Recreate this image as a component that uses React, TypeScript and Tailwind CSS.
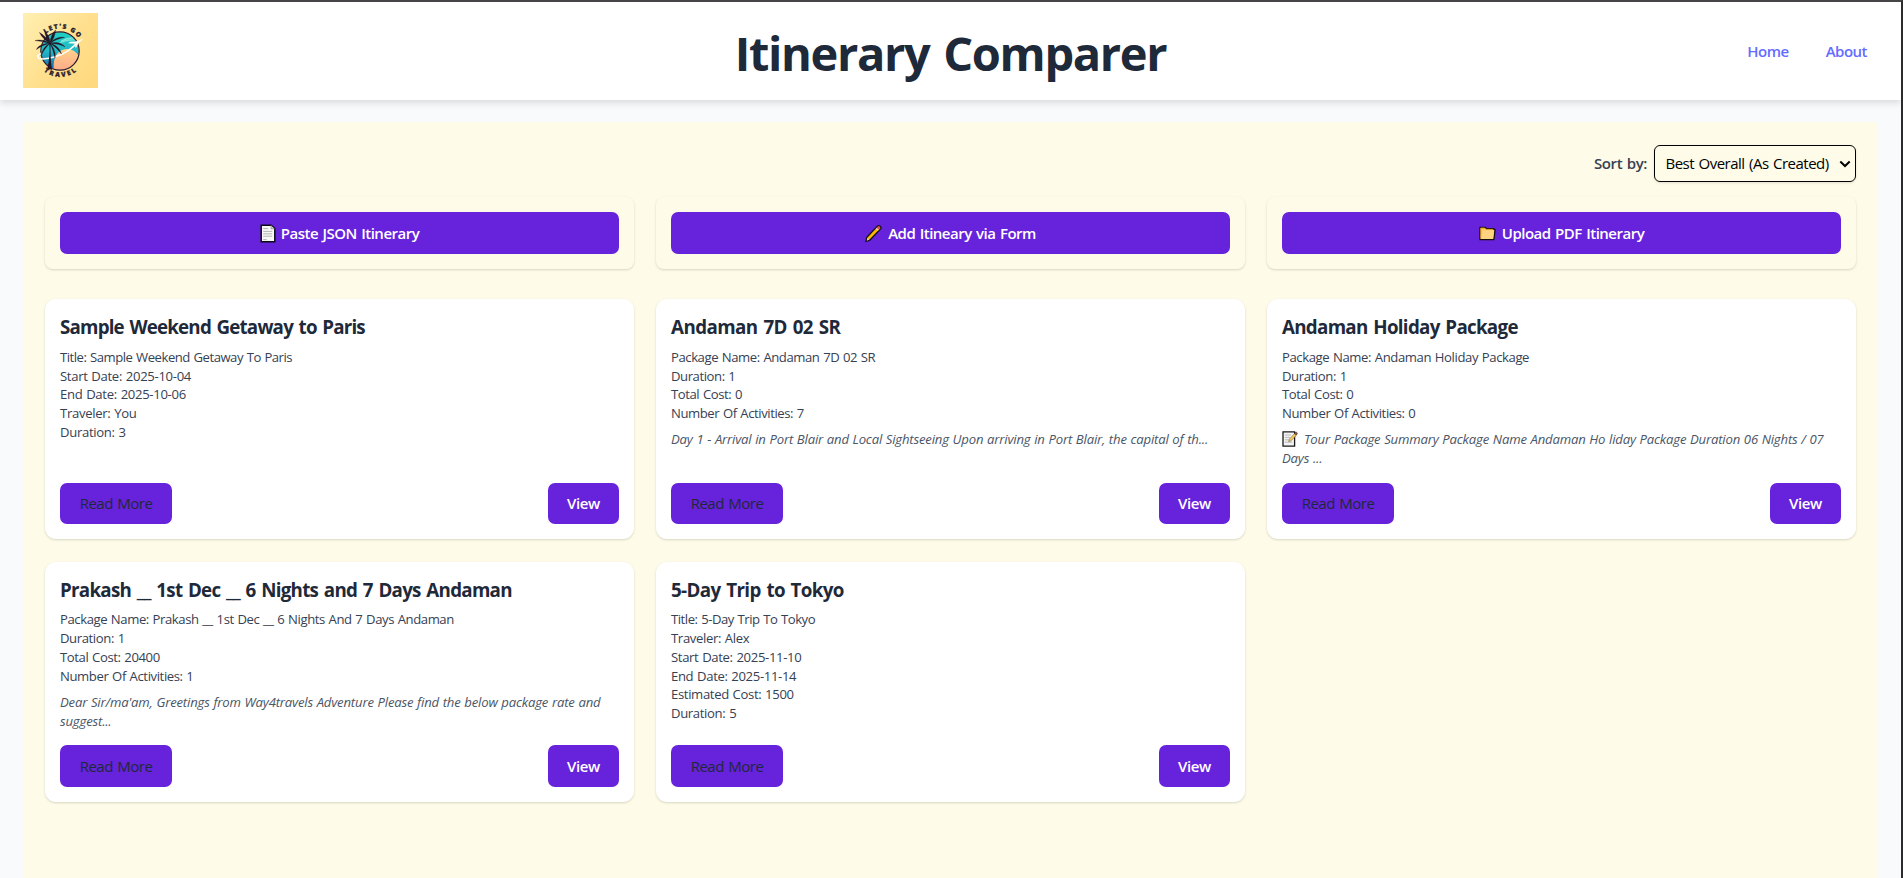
import React from "react";

type Itinerary = {
  title: string;
  titleTracking: string;
  details: string[];
  detailTracking: string;
  summary?: React.ReactNode;
};

const PageIcon = () => (
  <svg width="16" height="19" viewBox="0 0 16 19" className="shrink-0">
    <path d="M1.2 1.2h10l3.6 3.4v13.2H1.2z" fill="#f7f7f7" stroke="#0b0b14" strokeWidth="1.5" />
    <path d="M11 1.4v3.4h3.6" fill="#d4d4d4" stroke="#777" strokeWidth=".6" />
    <path d="M3.2 4.6h5M3.2 7.4h9M3.2 9.8h9M3.2 12.2h9M3.2 15.6h3.4" stroke="#b3b3b3" strokeWidth="1" />
  </svg>
);

const PencilIcon = () => (
  <svg width="17" height="19" viewBox="0 0 18 19" className="shrink-0">
    <path d="M1.1 17.9l.9-4.4L13.2 1.7c1.9-1.5 4.6.7 3.3 2.9L5.2 16.4z" fill="#f9b900" stroke="#15101c" strokeWidth="1.5" strokeLinejoin="round" />
    <path d="M12.3 3.6l1.3-1.3c1.3-.9 3.2.6 2.3 2l-1.2 1.3z" fill="#e8465a" />
    <path d="M11.3 4.6l1-1 2.4 2-1 1.1z" fill="#d5d5d5" />
    <path d="M1.9 17.1l.8-3 1.9 1.7z" fill="#f6d8b0" />
  </svg>
);

const FolderIcon = () => (
  <svg width="17" height="15" viewBox="0 0 18 16" className="shrink-0">
    <path d="M1 14.6V1.4h5.4l1.3 1.3h8.1v1.1h1.3l-1.4 10.8z" fill="#fdc960" stroke="#14100c" strokeWidth="1.4" strokeLinejoin="round" />
    <path d="M1.8 13.6V2.2h4.2l1.4 1.4h7.7" fill="none" stroke="#e39a1f" strokeWidth="1" />
    <path d="M3.6 4.6h12.4l-1.1 9.2H2.3z" fill="#ffd480" />
  </svg>
);

const MemoIcon = () => (
  <svg width="16" height="16" viewBox="0 0 16 16" className="mr-[6px] inline-block align-[-3px]">
    <path d="M1 .9h11.6v14.2H1z" fill="#f3f3f3" stroke="#1a1a1a" strokeWidth="1.3" />
    <path d="M2.8 4h6M2.8 6.4h5M2.8 8.8h4M2.8 11.2h7.5" stroke="#b9b9b9" strokeWidth="1" />
    <path d="M6.6 10.6l.7-2.5 5.9-6.2 1.8 1.7-5.9 6.2z" fill="#f5c860" stroke="#6a5430" strokeWidth=".5" />
    <path d="M12.4 2.6l1.3-1.3c.8-.5 2 .6 1.5 1.5l-1.2 1.3z" fill="#8a5550" stroke="#222" strokeWidth=".5" />
  </svg>
);

const Logo = () => (
  <svg width="75" height="75" viewBox="0 0 75 75" className="mb-[2px] shrink-0">
    <defs>
      <linearGradient id="logoBg" x1="0" y1="0" x2="1" y2=".8">
        <stop offset="0" stopColor="#fff0b3" />
        <stop offset=".55" stopColor="#ffe08f" />
        <stop offset="1" stopColor="#ffd97f" />
      </linearGradient>
      <linearGradient id="logoSky" x1="0" y1="0" x2="0" y2="1">
        <stop offset="0" stopColor="#1fcfc4" />
        <stop offset=".5" stopColor="#23b9c6" />
        <stop offset="1" stopColor="#1766a8" />
      </linearGradient>
      <linearGradient id="logoSand" x1="0" y1="0" x2="0" y2="1">
        <stop offset="0" stopColor="#ffd28a" />
        <stop offset="1" stopColor="#ffa588" />
      </linearGradient>
      <clipPath id="logoDisc">
        <circle cx="37" cy="38" r="19" />
      </clipPath>
      <path id="logoTop" d="M14.5 38a22.5 22.5 0 0 1 45 0" />
      <path id="logoBottom" d="M11 38a26 26 0 0 0 52 0" />
    </defs>
    <rect width="75" height="75" fill="url(#logoBg)" />
    <g clipPath="url(#logoDisc)">
      <circle cx="37" cy="38" r="19" fill="url(#logoSky)" />
      <path d="M35 31q8-5 19-4M38 28q6-3 12-3" stroke="#7be6dc" strokeWidth="1.3" fill="none" />
      <path d="M31 60c-1-9 0-17 5-21 6-5 16-4 21 6v15z" fill="url(#logoSand)" />
    </g>
    <circle cx="37" cy="38" r="19.2" fill="none" stroke="#2a1a2b" strokeWidth="1.2" />
    <path d="M18 40.6c-4 1.6-4.6 5 .6 5.3 8 .4 19-3 27-8.6 4-3 7-5.8 9-8.4" fill="none" stroke="#fffdf4" strokeWidth="1.6" />
    <path d="M60.8 25.5l-5.3 4.6-2.2 4.4-1.2-.1.5-3.7-7.4-.4 1.7-1.5 6-.3z" fill="#fffdf4" />
    <path d="M26.2 30c1 8 .2 17-1.8 25.5l4.6 1.6c-1.4-8-1.6-18-1.5-27z" fill="#261424" />
    <g fill="#261424" stroke="#261424" strokeWidth=".35">
      <path d="M27 30.5C24 25 20 21.5 16.5 19.5c2 4.5 6 8 10.5 11z" />
      <path d="M27 30.5C22 27 16 26.5 12 27.6c5 .6 10 1.4 15 2.9z" />
      <path d="M27 30.5c-6-.5-12 2-13.5 6 4-3 8-5 13.5-6z" />
      <path d="M27 30.5c-5 2-8 7-8.5 11.5 2-4.5 4.5-8 8.5-11.5z" />
      <path d="M27 30.5c0-5-2-9.5-5.5-12.5.8 4.5 2.5 9 5.5 12.5z" />
      <path d="M27 30.5c0-5 2-10 5.5-13.5-.4 4.5-2 10-5.5 13.5z" />
      <path d="M27 30.5c3-4.500 9-7 14.500-6-5 .8-10 2.500-14.500 6z" />
      <path d="M27 30.500c5-2 11.500-.8 15 3.300-5-2.400-10-3.400-15-3.300z" />
      <path d="M27 30.500c5.500 1 10 5 11.500 10.500-3.500-4.500-6.500-7.500-11.500-10.500z" />
      <path d="M27 30.500c3.500 3.500 6 9 5 14.500-1.500-5.500-2.500-10-5-14.500z" />
    </g>
    <text className="fill-[#2a1a2b] font-['Open_Sans',sans-serif] text-[6.5px] font-extrabold" stroke="#2a1a2b" strokeWidth=".25">
      <textPath href="#logoTop" startOffset="54%" textAnchor="middle" textLength="37">LET'S GO</textPath>
    </text>
    <text className="fill-[#2a1a2b] font-['Open_Sans',sans-serif] text-[6.5px] font-extrabold" stroke="#2a1a2b" strokeWidth=".25">
      <textPath href="#logoBottom" startOffset="50%" textAnchor="middle" textLength="35">TRAVEL</textPath>
    </text>
  </svg>
);

const actions = [
  { icon: <PageIcon />, label: "Paste JSON Itinerary", gap: "gap-[5px]" },
  { icon: <PencilIcon />, label: "Add Itineary via Form", gap: "gap-[6px]" },
  { icon: <FolderIcon />, label: "Upload PDF Itinerary", gap: "gap-[6px]" },
];

const itineraries: Itinerary[] = [
  {
    title: "Sample Weekend Getaway to Paris",
    titleTracking: "tracking-[-0.81px]",
    details: ["Title: Sample Weekend Getaway To Paris", "Start Date: 2025-10-04", "End Date: 2025-10-06", "Traveler: You", "Duration: 3"],
    detailTracking: "tracking-[-0.32px] first:tracking-[-0.48px]",
  },
  {
    title: "Andaman 7D 02 SR",
    titleTracking: "tracking-[-0.56px]",
    details: ["Package Name: Andaman 7D 02 SR", "Duration: 1", "Total Cost: 0", "Number Of Activities: 7"],
    detailTracking: "tracking-[-0.43px]",
    summary: "Day 1 - Arrival in Port Blair and Local Sightseeing Upon arriving in Port Blair, the capital of th...",
  },
  {
    title: "Andaman Holiday Package",
    titleTracking: "tracking-[-0.7px]",
    details: ["Package Name: Andaman Holiday Package", "Duration: 1", "Total Cost: 0", "Number Of Activities: 0"],
    detailTracking: "tracking-[-0.4px]",
    summary: (
      <>
        <MemoIcon />
        Tour Package Summary Package Name Andaman Ho liday Package Duration 06 Nights / 07 Days ...
      </>
    ),
  },
  {
    title: "Prakash __ 1st Dec __ 6 Nights and 7 Days Andaman",
    titleTracking: "tracking-[-0.73px]",
    details: ["Package Name: Prakash __ 1st Dec __ 6 Nights And 7 Days Andaman", "Duration: 1", "Total Cost: 20400", "Number Of Activities: 1"],
    detailTracking: "tracking-[-0.4px] first:tracking-[-0.42px]",
    summary: "Dear Sir/ma'am, Greetings from Way4travels Adventure Please find the below package rate and suggest...",
  },
  {
    title: "5-Day Trip to Tokyo",
    titleTracking: "tracking-[-0.63px]",
    details: ["Title: 5-Day Trip To Tokyo", "Traveler: Alex", "Start Date: 2025-11-10", "End Date: 2025-11-14", "Estimated Cost: 1500", "Duration: 5"],
    detailTracking: "tracking-[-0.35px] first:tracking-[-0.47px]",
  },
];

function ItineraryCard({ item }: { item: Itinerary }) {
  return (
    <article className="flex h-[240px] flex-col rounded-[11px] bg-white p-[15px] shadow-[0_1px_3px_rgba(0,0,0,0.1),0_1px_2px_rgba(0,0,0,0.06)]">
      <h2 className={`mb-[7.5px] text-[18.75px] leading-[26.25px] font-bold [word-spacing:1.5px] whitespace-nowrap text-gray-800 ${item.titleTracking}`}>{item.title}</h2>
      <ul className="text-[13.125px] leading-[18.75px] [word-spacing:0.7px] text-gray-700">
        {item.details.map((line) => (
          <li key={line} className={item.detailTracking}>
            {line}
          </li>
        ))}
      </ul>
      {item.summary && (
        <p className="mt-[7.5px] text-[13.125px] leading-[18.75px] tracking-[-0.17px] [word-spacing:0.5px] text-gray-600 italic">{item.summary}</p>
      )}
      <div className="mt-auto flex items-center justify-between">
        <button className="h-[41.25px] w-[112px] rounded-[7px] bg-[#6722dc] font-medium tracking-[-0.5px] [word-spacing:1px] text-gray-800">Read More</button>
        <button className="h-[41.25px] w-[71px] rounded-[7px] bg-[#6722dc] font-semibold tracking-[-0.35px] text-white">View</button>
      </div>
    </article>
  );
}

export default function App() {
  return (
    <div className="h-screen overflow-hidden border-t-2 border-r-2 border-t-[#464446] border-r-[#2b2b2b] bg-[#f8fafc] font-['Open_Sans','Noto_Sans',sans-serif] text-[15px] leading-[22.5px]">
      <header className="grid h-[98px] grid-cols-[1fr_auto_1fr] items-center bg-white px-[23px] shadow-[0_3px_7px_rgba(0,0,0,0.13)]">
        <Logo />
        <h1 className="pt-[3px] text-[47px] leading-[60px] font-bold tracking-[-1.35px] [word-spacing:3px] text-gray-800">Itinerary Comparer</h1>
        <nav className="flex justify-end gap-[37px] pr-[11px] font-semibold tracking-[-0.5px] text-[#646cff]">
          <a href="#home">Home</a>
          <a href="#about">About</a>
        </nav>
      </header>

      <main className="mx-[23px] mt-[22px] h-[800px] bg-[#fefce8] px-[22px] pt-[23px]">
        <div className="mb-[15px] flex h-[37px] items-center justify-end gap-[7px]">
          <label htmlFor="sort" className="font-semibold tracking-[-0.4px] [word-spacing:1px] text-gray-700">
            Sort by:
          </label>
          <div className="grid h-[37px] w-[202px] items-center">
            <select
              id="sort"
              className="col-start-1 row-start-1 h-[37px] w-full appearance-none rounded-[6px] border border-black bg-transparent pl-[10.5px] tracking-[-0.5px] [word-spacing:1px] text-black shadow-sm outline-none"
            >
              <option>Best Overall (As Created)</option>
            </select>
            <svg width="12" height="8" viewBox="0 0 12 8" className="pointer-events-none col-start-1 row-start-1 mr-[5px] justify-self-end">
              <path d="M1.3 1.5L6 6l4.7-4.5" fill="none" stroke="#000" strokeWidth="2" />
            </svg>
          </div>
        </div>

        <div className="mb-[30px] grid grid-cols-3 gap-[22px]">
          {actions.map((action) => (
            <div key={action.label} className="rounded-[8px] p-[15px] shadow-[0_1px_3px_rgba(0,0,0,0.1),0_1px_2px_rgba(0,0,0,0.06)]">
              <button className={`flex h-[42px] w-full items-center justify-center rounded-[7px] bg-[#6722dc] font-semibold tracking-[-0.5px] [word-spacing:1px] text-white ${action.gap}`}>
                {action.icon}
                {action.label}
              </button>
            </div>
          ))}
        </div>

        <div className="grid grid-cols-3 gap-x-[22px] gap-y-[22.5px]">
          {itineraries.map((item) => (
            <ItineraryCard key={item.title} item={item} />
          ))}
        </div>
      </main>
    </div>
  );
}
